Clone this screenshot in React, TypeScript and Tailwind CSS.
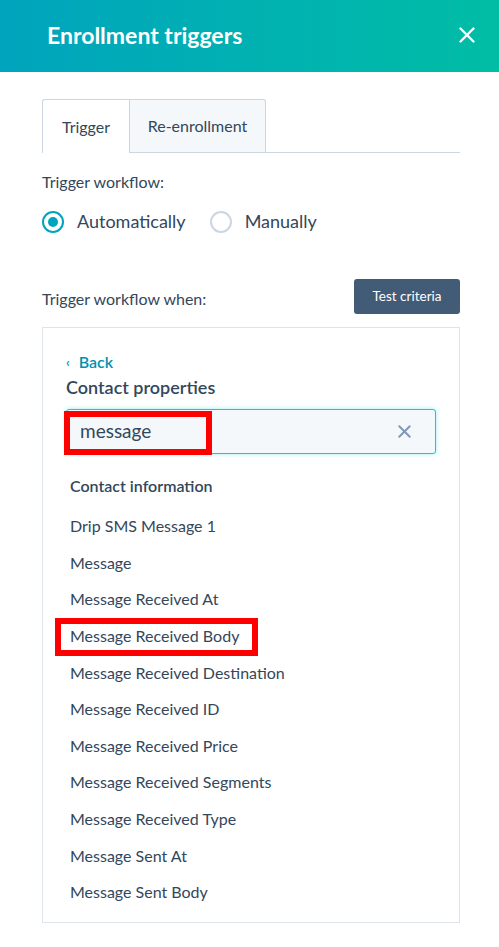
import { X } from 'lucide-react'

const properties = [
  'Drip SMS Message 1',
  'Message',
  'Message Received At',
  'Message Received Body',
  'Message Received Destination',
  'Message Received ID',
  'Message Received Price',
  'Message Received Segments',
  'Message Received Type',
  'Message Sent At',
  'Message Sent Body',
]

function Radio({ label, checked }: { label: string; checked?: boolean }) {
  return (
    <label className="flex items-center gap-[13px]">
      <span
        className={
          checked
            ? 'flex h-[22px] w-[22px] items-center justify-center rounded-full border-2 border-[#00a4bd] bg-white'
            : 'flex h-[22px] w-[22px] items-center justify-center rounded-full border-2 border-[#cbd6e2] bg-white'
        }
      >
        {checked ? <span className="h-[10px] w-[10px] rounded-full bg-[#00a4bd]" /> : null}
      </span>
      <span className="text-[18px] leading-[27px] text-[#33475b]">{label}</span>
    </label>
  )
}

export default function App() {
  return (
    <div className="h-[947px] w-[499px] overflow-hidden bg-white font-['Lato',sans-serif] text-[#33475b]">
      <header className="flex h-[72px] items-center justify-between bg-gradient-to-r from-[#00a4bd] to-[#00bda5] pb-[2px] pl-[47px] pr-[19px]">
        <h1 className="text-[23px] font-bold text-white">Enrollment triggers</h1>
        <X className="h-[26px] w-[26px] text-white" strokeWidth={2.2} />
      </header>

      <div className="pl-[42px] pr-[39px] pt-[27px]">
        <div className="flex h-[54px] border-b border-[#cbd6e2]">
          <div className="-mb-px flex w-[87px] items-center justify-center rounded-tl-[3px] border-l border-t border-[#cbd6e2] bg-white text-[16px]">
            Trigger
          </div>
          <div className="flex w-[137px] items-center justify-center rounded-tr-[3px] border-x border-t border-[#cbd6e2] bg-[#f5f8fa] text-[16px]">
            Re-enrollment
          </div>
        </div>

        <p className="mt-[17px] text-[16px] leading-[24px]">Trigger workflow:</p>
        <div className="mt-[14px] flex items-center gap-[24px]">
          <Radio label="Automatically" checked />
          <Radio label="Manually" />
        </div>

        <div className="mt-[44px] flex items-end justify-between">
          <p className="pb-[3px] text-[16px] leading-[24px]">Trigger workflow when:</p>
          <button className="h-[35px] w-[106px] rounded-[3px] bg-[#425b76] text-[13.5px] text-white">
            Test criteria
          </button>
        </div>

        <div className="mt-[13px] h-[596px] border border-[#dfe3eb] px-[23px] pt-[24px]">
          <button className="flex items-center gap-[9px] text-[16px] font-semibold leading-[20px] text-[#0091ae]">
            <span className="text-[13px]">‹</span>
            Back
          </button>
          <h2 className="mt-[3px] text-[18px] font-semibold leading-[24px]">Contact properties</h2>

          <div className="relative mt-[10px] flex h-[45px] items-center justify-between rounded-[3px] border border-[#00d0e4] bg-[#f5f8fa] pl-[13px] pr-[20px] shadow-[0_0_4px_rgba(0,208,228,0.4)]">
            <span className="text-[19px]">message</span>
            <X className="h-[21px] w-[21px] text-[#7c98b6]" strokeWidth={2.2} />
            <span className="absolute left-[-3px] top-[1px] h-[44px] w-[148px] border-[6px] border-[#ff0000]" />
          </div>

          <p className="mt-[20px] pl-[4px] text-[16px] font-semibold leading-[24px]">Contact information</p>
          <ul className="mt-[10px] pl-[4px]">
            {properties.map((p) => (
              <li key={p} className="relative flex h-[36.6px] items-center text-[16px]">
                {p}
                {p === 'Message Received Body' ? (
                  <span className="absolute left-[-15px] top-0 h-[38px] w-[203px] border-[6px] border-[#ff0000]" />
                ) : null}
              </li>
            ))}
          </ul>
        </div>
      </div>
    </div>
  )
}
